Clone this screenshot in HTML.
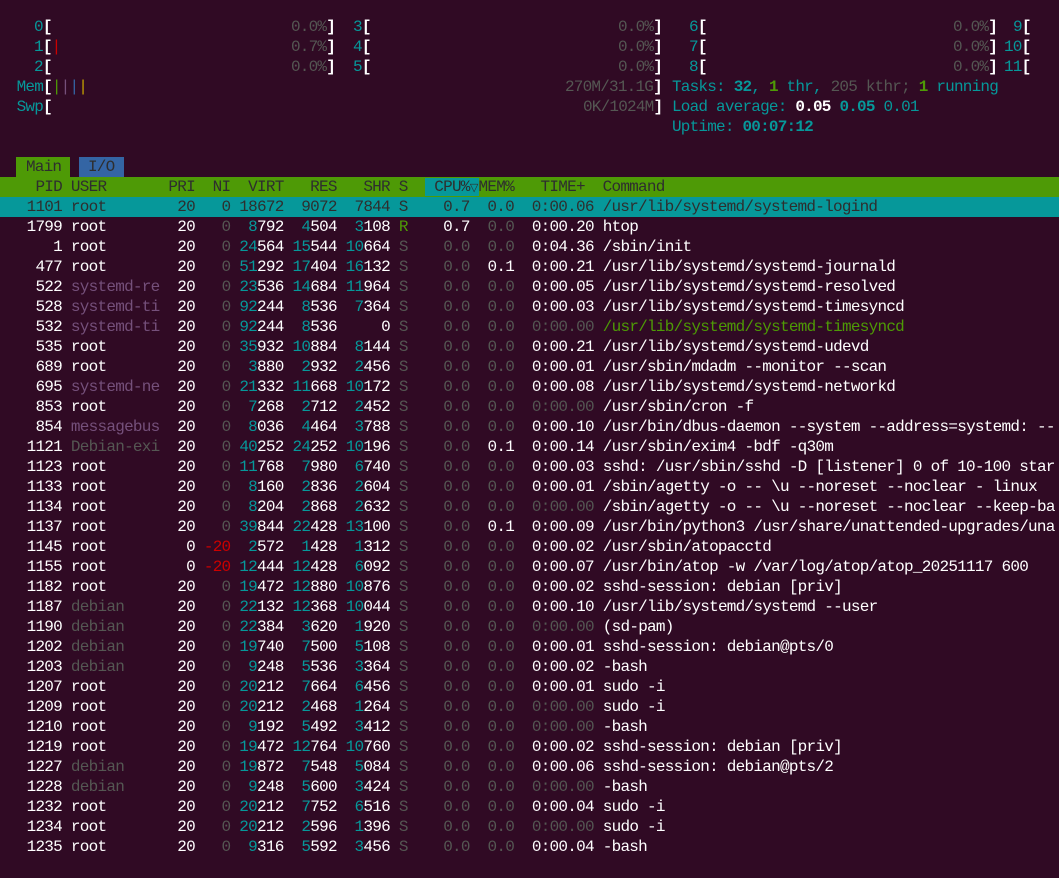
<!DOCTYPE html>
<html><head><meta charset="utf-8"><style>
html,body{margin:0;padding:0;background:#300a24;width:1059px;height:878px;overflow:hidden}
body{position:relative;font-family:"Liberation Mono","DejaVu Sans Mono",monospace;font-size:16px;letter-spacing:-0.74px;color:#ffffff}
.l{position:absolute;left:0px;top:0;height:20px;line-height:21px;white-space:pre;width:1100px}
.a{position:absolute;height:20px;line-height:21px;white-space:pre;letter-spacing:-0.79px}
i{font-style:normal;color:#06989a}
u{text-decoration:none;color:#555753}
s{text-decoration:none;color:#75507b}
em{font-style:normal;color:#4e9a06}
del{text-decoration:none;color:#cc0000}
.k{font-weight:bold;color:#fff}
.cb{color:#06989a;font-weight:bold}
.gb{color:#4e9a06;font-weight:bold}
.hl{background:#06989a;color:#2e2e2e;width:1070px}
.hl *{color:#2e2e2e}
.hdr{background:#4e9a06;color:#2e2e2e;width:1070px}
.tri{display:inline-block;width:8.86px;font-family:"DejaVu Sans",sans-serif;font-size:11px;letter-spacing:0;text-align:center}
</style></head><body>
<div class="a" style="top:17px;left:34px"><i>0</i><span class="k">[</span></div>
<div class="a" style="top:17px;left:291px"><u>0.0%</u><span class="k">]</span></div>
<div class="a" style="top:37px;left:34px"><i>1</i><span class="k">[</span><del>|</del></div>
<div class="a" style="top:37px;left:291px"><u>0.7%</u><span class="k">]</span></div>
<div class="a" style="top:57px;left:34px"><i>2</i><span class="k">[</span></div>
<div class="a" style="top:57px;left:291px"><u>0.0%</u><span class="k">]</span></div>

<div class="a" style="top:17px;left:353px"><i>3</i><span class="k">[</span></div>
<div class="a" style="top:17px;left:618px"><u>0.0%</u><span class="k">]</span></div>
<div class="a" style="top:37px;left:353px"><i>4</i><span class="k">[</span></div>
<div class="a" style="top:37px;left:618px"><u>0.0%</u><span class="k">]</span></div>
<div class="a" style="top:57px;left:353px"><i>5</i><span class="k">[</span></div>
<div class="a" style="top:57px;left:618px"><u>0.0%</u><span class="k">]</span></div>

<div class="a" style="top:17px;left:689px"><i>6</i><span class="k">[</span></div>
<div class="a" style="top:17px;left:953px"><u>0.0%</u><span class="k">]</span></div>
<div class="a" style="top:37px;left:689px"><i>7</i><span class="k">[</span></div>
<div class="a" style="top:37px;left:953px"><u>0.0%</u><span class="k">]</span></div>
<div class="a" style="top:57px;left:689px"><i>8</i><span class="k">[</span></div>
<div class="a" style="top:57px;left:953px"><u>0.0%</u><span class="k">]</span></div>

<div class="a" style="top:17px;left:1013px"><i>9</i><span class="k">[</span></div>
<div class="a" style="top:37px;left:1004px"><i>10</i><span class="k">[</span></div>
<div class="a" style="top:57px;left:1004px"><i>11</i><span class="k">[</span></div>

<div class="a" style="top:77px;left:16.6px"><i>Mem</i><span class="k">[</span><em>|</em><s>|</s><span style="color:#3465a4">|</span><span style="color:#c4a000">|</span></div>
<div class="a" style="top:77px;left:565px"><u>270M/31.1G</u><span class="k">]</span></div>
<div class="a" style="top:97px;left:16.6px"><i>Swp</i><span class="k">[</span></div>
<div class="a" style="top:97px;left:583px"><u>0K/1024M</u><span class="k">]</span></div>

<div class="a" style="top:77px;left:672px"><i>Tasks: </i><span class="cb">32</span><i>, </i><span class="gb">1</span><i> thr, </i><u>205 kthr; </u><span class="gb">1</span><i> running</i></div>
<div class="a" style="top:97px;left:672px"><i>Load average: </i><span class="k">0.05 </span><span class="cb">0.05 </span><i>0.01</i></div>
<div class="a" style="top:117px;left:672px"><i>Uptime: </i><span class="cb">00:07:12</span></div>

<div class="a" style="top:157px;left:16px;width:54px;background:#4e9a06"></div>
<div class="a" style="top:157px;left:79px;width:45px;background:#3465a4"></div>
<div class="a" style="top:157px;left:26px;color:#2e2e2e">Main</div>
<div class="a" style="top:157px;left:88px;color:#2e2e2e">I/O</div>

<div class="l hdr" style="top:177px">    PID USER       PRI  NI  VIRT   RES   SHR S  <span style="background:#06989a"> CPU%<span class="tri">▽</span></span>MEM%   TIME+  Command</div>

<div class="l hl" style="top:197px">   1101 root        20   0 18672  9072  7844 S    0.7  0.0  0:00.06 /usr/lib/systemd/systemd-logind</div>
<div class="l" style="top:217px">   1799 root        20   <u>0</u>  <i>8</i>792  <i>4</i>504  <i>3</i>108 <em>R</em>    0.7  <u>0.0</u>  0:00.20 htop</div>
<div class="l" style="top:237px">      1 root        20   <u>0</u> <i>24</i>564 <i>15</i>544 <i>10</i>664 <u>S</u>    <u>0.0</u>  <u>0.0</u>  0:04.36 /sbin/init</div>
<div class="l" style="top:257px">    477 root        20   <u>0</u> <i>51</i>292 <i>17</i>404 <i>16</i>132 <u>S</u>    <u>0.0</u>  0.1  0:00.21 /usr/lib/systemd/systemd-journald</div>
<div class="l" style="top:277px">    522 <s>systemd-re</s>  20   <u>0</u> <i>23</i>536 <i>14</i>684 <i>11</i>964 <u>S</u>    <u>0.0</u>  <u>0.0</u>  0:00.05 /usr/lib/systemd/systemd-resolved</div>
<div class="l" style="top:297px">    528 <s>systemd-ti</s>  20   <u>0</u> <i>92</i>244  <i>8</i>536  <i>7</i>364 <u>S</u>    <u>0.0</u>  <u>0.0</u>  0:00.03 /usr/lib/systemd/systemd-timesyncd</div>
<div class="l" style="top:317px">    532 <s>systemd-ti</s>  20   <u>0</u> <i>92</i>244  <i>8</i>536     0 <u>S</u>    <u>0.0</u>  <u>0.0</u>  <u>0:00.00</u> <em>/usr/lib/systemd/systemd-timesyncd</em></div>
<div class="l" style="top:337px">    535 root        20   <u>0</u> <i>35</i>932 <i>10</i>884  <i>8</i>144 <u>S</u>    <u>0.0</u>  <u>0.0</u>  0:00.21 /usr/lib/systemd/systemd-udevd</div>
<div class="l" style="top:357px">    689 root        20   <u>0</u>  <i>3</i>880  <i>2</i>932  <i>2</i>456 <u>S</u>    <u>0.0</u>  <u>0.0</u>  0:00.01 /usr/sbin/mdadm --monitor --scan</div>
<div class="l" style="top:377px">    695 <s>systemd-ne</s>  20   <u>0</u> <i>21</i>332 <i>11</i>668 <i>10</i>172 <u>S</u>    <u>0.0</u>  <u>0.0</u>  0:00.08 /usr/lib/systemd/systemd-networkd</div>
<div class="l" style="top:397px">    853 root        20   <u>0</u>  <i>7</i>268  <i>2</i>712  <i>2</i>452 <u>S</u>    <u>0.0</u>  <u>0.0</u>  <u>0:00.00</u> /usr/sbin/cron -f</div>
<div class="l" style="top:417px">    854 <s>messagebus</s>  20   <u>0</u>  <i>8</i>036  <i>4</i>464  <i>3</i>788 <u>S</u>    <u>0.0</u>  <u>0.0</u>  0:00.10 /usr/bin/dbus-daemon --system --address=systemd: --</div>
<div class="l" style="top:437px">   1121 <u>Debian-exi</u>  20   <u>0</u> <i>40</i>252 <i>24</i>252 <i>10</i>196 <u>S</u>    <u>0.0</u>  0.1  0:00.14 /usr/sbin/exim4 -bdf -q30m</div>
<div class="l" style="top:457px">   1123 root        20   <u>0</u> <i>11</i>768  <i>7</i>980  <i>6</i>740 <u>S</u>    <u>0.0</u>  <u>0.0</u>  0:00.03 sshd: /usr/sbin/sshd -D [listener] 0 of 10-100 star</div>
<div class="l" style="top:477px">   1133 root        20   <u>0</u>  <i>8</i>160  <i>2</i>836  <i>2</i>604 <u>S</u>    <u>0.0</u>  <u>0.0</u>  0:00.01 /sbin/agetty -o -- \u --noreset --noclear - linux</div>
<div class="l" style="top:497px">   1134 root        20   <u>0</u>  <i>8</i>204  <i>2</i>868  <i>2</i>632 <u>S</u>    <u>0.0</u>  <u>0.0</u>  <u>0:00.00</u> /sbin/agetty -o -- \u --noreset --noclear --keep-ba</div>
<div class="l" style="top:517px">   1137 root        20   <u>0</u> <i>39</i>844 <i>22</i>428 <i>13</i>100 <u>S</u>    <u>0.0</u>  0.1  0:00.09 /usr/bin/python3 /usr/share/unattended-upgrades/una</div>
<div class="l" style="top:537px">   1145 root         0 <del>-20</del>  <i>2</i>572  <i>1</i>428  <i>1</i>312 <u>S</u>    <u>0.0</u>  <u>0.0</u>  0:00.02 /usr/sbin/atopacctd</div>
<div class="l" style="top:557px">   1155 root         0 <del>-20</del> <i>12</i>444 <i>12</i>428  <i>6</i>092 <u>S</u>    <u>0.0</u>  <u>0.0</u>  0:00.07 /usr/bin/atop -w /var/log/atop/atop_20251117 600</div>
<div class="l" style="top:577px">   1182 root        20   <u>0</u> <i>19</i>472 <i>12</i>880 <i>10</i>876 <u>S</u>    <u>0.0</u>  <u>0.0</u>  0:00.02 sshd-session: debian [priv]</div>
<div class="l" style="top:597px">   1187 <u>debian</u>      20   <u>0</u> <i>22</i>132 <i>12</i>368 <i>10</i>044 <u>S</u>    <u>0.0</u>  <u>0.0</u>  0:00.10 /usr/lib/systemd/systemd --user</div>
<div class="l" style="top:617px">   1190 <u>debian</u>      20   <u>0</u> <i>22</i>384  <i>3</i>620  <i>1</i>920 <u>S</u>    <u>0.0</u>  <u>0.0</u>  <u>0:00.00</u> (sd-pam)</div>
<div class="l" style="top:637px">   1202 <u>debian</u>      20   <u>0</u> <i>19</i>740  <i>7</i>500  <i>5</i>108 <u>S</u>    <u>0.0</u>  <u>0.0</u>  0:00.01 sshd-session: debian@pts/0</div>
<div class="l" style="top:657px">   1203 <u>debian</u>      20   <u>0</u>  <i>9</i>248  <i>5</i>536  <i>3</i>364 <u>S</u>    <u>0.0</u>  <u>0.0</u>  0:00.02 -bash</div>
<div class="l" style="top:677px">   1207 root        20   <u>0</u> <i>20</i>212  <i>7</i>664  <i>6</i>456 <u>S</u>    <u>0.0</u>  <u>0.0</u>  0:00.01 sudo -i</div>
<div class="l" style="top:697px">   1209 root        20   <u>0</u> <i>20</i>212  <i>2</i>468  <i>1</i>264 <u>S</u>    <u>0.0</u>  <u>0.0</u>  <u>0:00.00</u> sudo -i</div>
<div class="l" style="top:717px">   1210 root        20   <u>0</u>  <i>9</i>192  <i>5</i>492  <i>3</i>412 <u>S</u>    <u>0.0</u>  <u>0.0</u>  <u>0:00.00</u> -bash</div>
<div class="l" style="top:737px">   1219 root        20   <u>0</u> <i>19</i>472 <i>12</i>764 <i>10</i>760 <u>S</u>    <u>0.0</u>  <u>0.0</u>  0:00.02 sshd-session: debian [priv]</div>
<div class="l" style="top:757px">   1227 <u>debian</u>      20   <u>0</u> <i>19</i>872  <i>7</i>548  <i>5</i>084 <u>S</u>    <u>0.0</u>  <u>0.0</u>  0:00.06 sshd-session: debian@pts/2</div>
<div class="l" style="top:777px">   1228 <u>debian</u>      20   <u>0</u>  <i>9</i>248  <i>5</i>600  <i>3</i>424 <u>S</u>    <u>0.0</u>  <u>0.0</u>  <u>0:00.00</u> -bash</div>
<div class="l" style="top:797px">   1232 root        20   <u>0</u> <i>20</i>212  <i>7</i>752  <i>6</i>516 <u>S</u>    <u>0.0</u>  <u>0.0</u>  0:00.04 sudo -i</div>
<div class="l" style="top:817px">   1234 root        20   <u>0</u> <i>20</i>212  <i>2</i>596  <i>1</i>396 <u>S</u>    <u>0.0</u>  <u>0.0</u>  <u>0:00.00</u> sudo -i</div>
<div class="l" style="top:837px">   1235 root        20   <u>0</u>  <i>9</i>316  <i>5</i>592  <i>3</i>456 <u>S</u>    <u>0.0</u>  <u>0.0</u>  0:00.04 -bash</div>
</body></html>
